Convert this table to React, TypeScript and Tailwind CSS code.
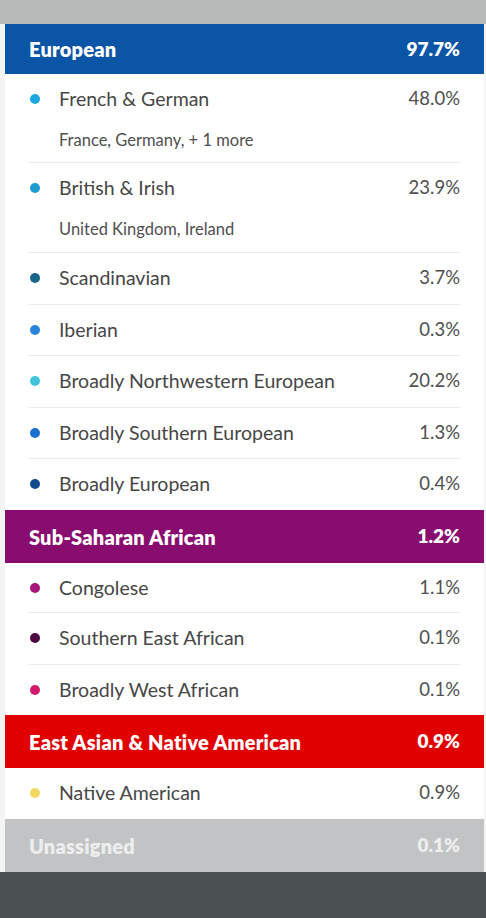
import React from "react";

type Row = { name: string; pct: string; color: string; sub?: string; h: string; divider?: boolean };

const Header = ({ name, pct, bg, h, text }: { name: string; pct: string; bg: string; h: string; text?: string }) => (
  <div className={`flex items-center justify-between px-[24px] ${bg} ${h}`}>
    <span className={`text-[20px] font-extrabold tracking-[0.2px] ${text ?? "text-white"}`}>{name}</span>
    <span className={`text-[19px] font-extrabold ${text ?? "text-white"}`}>{pct}</span>
  </div>
);

const Item = ({ r }: { r: Row }) => (
  <div className={`mx-[24px] flex flex-col ${r.h} ${r.divider ? "border-b border-[#ebebeb]" : ""}`}>
    <div className="flex h-[50px] items-center justify-between">
      <div className="flex items-center">
        <span className="ml-[1px] h-[10px] w-[10px] rounded-full" style={{ backgroundColor: r.color }} />
        <span className="ml-[19px] text-[19.5px] text-[#474747]">{r.name}</span>
      </div>
      <span className="text-[18.5px] text-[#505050]">{r.pct}</span>
    </div>
    {r.sub && <div className="ml-[30px] mt-[4px] text-[16.5px] text-[#4f4f4f]">{r.sub}</div>}
  </div>
);

const european: Row[] = [
  { name: "French & German", pct: "48.0%", color: "#1ca9e0", sub: "France, Germany, + 1 more", h: "h-[89px]", divider: true },
  { name: "British & Irish", pct: "23.9%", color: "#1b9bd0", sub: "United Kingdom, Ireland", h: "h-[90px]", divider: true },
  { name: "Scandinavian", pct: "3.7%", color: "#17648b", h: "h-[52px]", divider: true },
  { name: "Iberian", pct: "0.3%", color: "#2c84da", h: "h-[51px]", divider: true },
  { name: "Broadly Northwestern European", pct: "20.2%", color: "#3fc4dc", h: "h-[52px]", divider: true },
  { name: "Broadly Southern European", pct: "1.3%", color: "#1b6fd0", h: "h-[51px]", divider: true },
  { name: "Broadly European", pct: "0.4%", color: "#114b8b", h: "h-[51px]" },
];

const african: Row[] = [
  { name: "Congolese", pct: "1.1%", color: "#a5157b", h: "h-[50px]", divider: true },
  { name: "Southern East African", pct: "0.1%", color: "#4f0b3f", h: "h-[52px]", divider: true },
  { name: "Broadly West African", pct: "0.1%", color: "#d1196b", h: "h-[50px]" },
];

export default function App() {
  return (
    <div className="flex h-[918px] w-[486px] flex-col bg-[#f4f4f4]" style={{ fontFamily: "Lato, 'Noto Sans', sans-serif" }}>
      <div className="h-[24px] shrink-0 bg-[#b6bbba]" />
      <div className="ml-[5px] mr-[2px] flex flex-col bg-white">
        <Header name="European" pct="97.7%" bg="bg-[#0a55a6]" h="h-[50px]" />
        {european.map((r) => (
          <Item key={r.name} r={r} />
        ))}
        <Header name="Sub-Saharan African" pct="1.2%" bg="bg-[#890c6f]" h="h-[53px]" />
        {african.map((r) => (
          <Item key={r.name} r={r} />
        ))}
        <Header name="East Asian & Native American" pct="0.9%" bg="bg-[#e10000]" h="h-[53px]" />
        <Item r={{ name: "Native American", pct: "0.9%", color: "#f2d862", h: "h-[51px]" }} />
        <Header name="Unassigned" pct="0.1%" bg="bg-[#c1c3c4]" h="h-[53px]" text="text-[#eeeeee]" />
      </div>
      <div className="flex-1 bg-[#4a5051]" />
    </div>
  );
}
